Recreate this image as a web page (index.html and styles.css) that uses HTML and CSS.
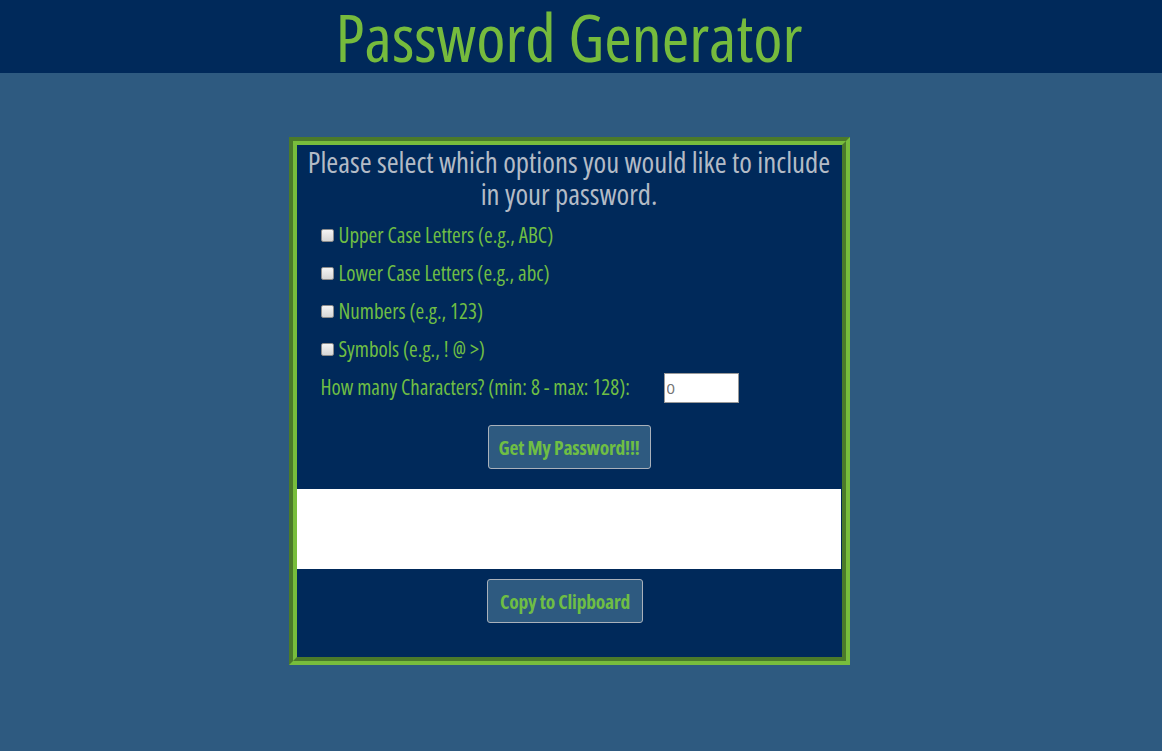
FILE: index.html
```html
<!DOCTYPE html>
<html lang="en">
<head>
<meta charset="utf-8">
<title>Password Generator</title>
<link rel="stylesheet" href="styles.css">
</head>
<body>
<header class="top">
  <h1 class="title">Password Generator</h1>
</header>
<main class="main">
  <div class="frame">
    <div class="frame-inner">
      <h2 class="prompt">Please select which options you would like to include in your password.</h2>
      <div class="options">
        <label class="opt"><input type="checkbox" class="cb"><span>Upper Case Letters (e.g., ABC)</span></label>
        <label class="opt"><input type="checkbox" class="cb"><span>Lower Case Letters (e.g., abc)</span></label>
        <label class="opt"><input type="checkbox" class="cb"><span>Numbers (e.g., 123)</span></label>
        <label class="opt"><input type="checkbox" class="cb"><span>Symbols (e.g., ! @ &gt;)</span></label>
        <div class="opt count">
          <span class="count-label">How many Characters? (min: 8 - max: 128):</span>
          <input type="text" class="num" placeholder="0">
        </div>
      </div>
      <div class="btn-row gen-row"><button class="btn gen">Get My Password!!!</button></div>
      <textarea class="output" readonly></textarea>
      <div class="btn-row copy-row"><button class="btn copy">Copy to Clipboard</button></div>
    </div>
  </div>
</main>
</body>
</html>
```
FILE: styles.css
```css
html, body {
  margin: 0;
  padding: 0;
}
body {
  background: #2e5a80;
  font-family: "Open Sans", "Roboto Condensed", "DejaVu Sans Condensed", sans-serif;
  font-stretch: 75%;
  min-height: 751px;
}
.top {
  background: #00295a;
  height: 73px;
  padding-right: 24px;
  text-align: center;
}
.title {
  margin: 0;
  font-weight: normal;
  font-size: 66.5px;
  line-height: 73px;
  color: #76bb3d;
}
.main {
  padding: 64px 24px 0 0;
  display: flex;
  justify-content: center;
}
.frame {
  width: 553px;
  border: 4px solid;
  border-color: #4b7a2a #78bd3c #78bd3c #4b7a2a;
}
.frame-inner {
  border: 4px solid;
  border-color: #78bd3c #4b7a2a #4b7a2a #78bd3c;
  background: #00295a;
  padding-bottom: 34px;
}
.prompt {
  margin: 0;
  padding: 1px 6px 0;
  text-align: center;
  font-weight: normal;
  font-size: 28.8px;
  line-height: 32px;
  color: #b3bbc6;
}
.options {
  padding: 6px 0 0 24px;
  display: flex;
  flex-direction: column;
}
.opt {
  display: flex;
  align-items: center;
  height: 38px;
  font-size: 21px;
  color: #6fbe44;
}
.cb {
  appearance: none;
  -webkit-appearance: none;
  box-sizing: border-box;
  width: 13px;
  height: 13px;
  margin: 0 5px 0 0;
  border: 1px solid #8c8c8c;
  border-radius: 2px;
  background: linear-gradient(#f4f4f4, #d6d6d6);
}
.count-label {
  width: 343px;
}
.num {
  width: 71px;
  height: 28px;
  margin-top: 2px;
  box-sizing: content-box;
  padding: 0 0 0 2px;
  border: 1px solid #999;
  font-family: "Liberation Sans", sans-serif;
  font-size: 15px;
  color: #757575;
  background: #fff;
}
.num::placeholder {
  color: #757575;
}
.btn-row {
  display: flex;
  justify-content: center;
}
.gen-row {
  padding: 19px 0 20px;
}
.copy-row {
  padding-top: 10px;
}
.btn {
  font-family: inherit;
  font-stretch: 75%;
  font-weight: bold;
  font-size: 19.5px;
  letter-spacing: -0.2px;
  color: #6fbe44;
  background: #2e5a80;
  border: 1px solid #a9b1bb;
  border-radius: 3px;
  height: 44px;
  padding: 0 12px;
}
.gen {
  padding: 0 10px;
}
.copy {
  margin-right: 8px;
}
.output {
  display: block;
  width: 544px;
  height: 80px;
  box-sizing: border-box;
  border: 0;
  margin: 0;
  resize: none;
  background: #fff;
}
```
